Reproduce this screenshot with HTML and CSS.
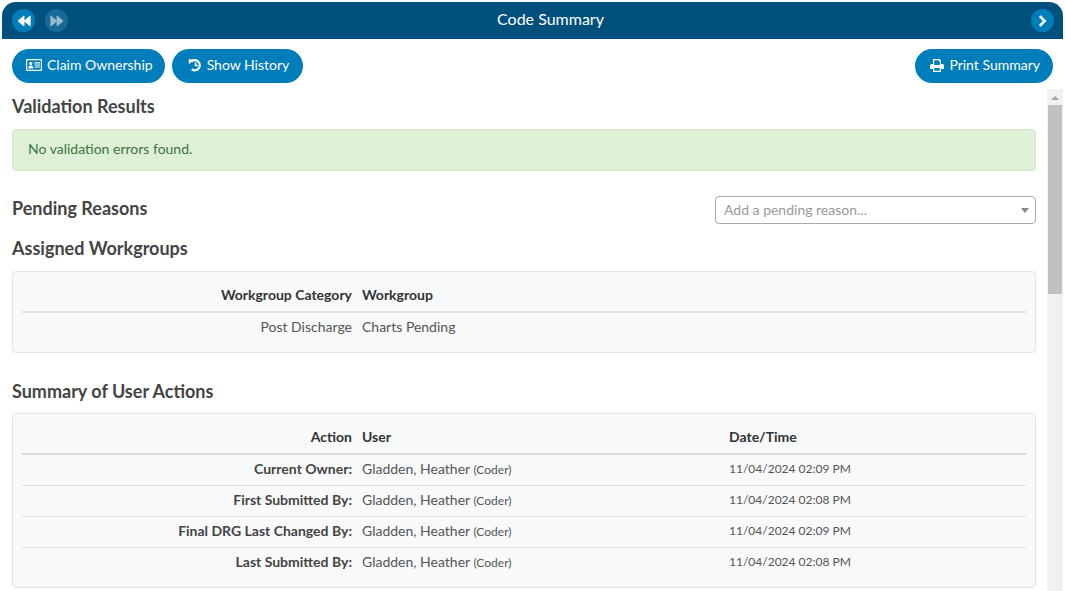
FILE: index.html
```html
<!DOCTYPE html>
<html lang="en">

<head>
    <meta charset="UTF-8">
    <meta name="viewport" content="width=device-width, initial-scale=1.0">
    <title>Code Summary</title>
    <link rel="stylesheet" href="styles.css">
</head>

<body>
    <section class="app">
        <header class="titlebar">
            <div class="nav-group">
                <button class="nav-btn" aria-label="Previous">
                    <svg viewBox="0 0 16 16" width="14" height="14"><path d="M8 2.2v11.6L1.2 8zM15 2.2v11.6L8.2 8z" fill="#fff" stroke="#fff" stroke-width="1" stroke-linejoin="round"/></svg>
                </button>
                <button class="nav-btn nav-btn-off" aria-label="Next">
                    <svg viewBox="0 0 16 16" width="14" height="14"><path d="M1 2.2v11.6L7.8 8zM8 2.2v11.6L14.8 8z" fill="#fff" stroke="#fff" stroke-width="1" stroke-linejoin="round"/></svg>
                </button>
            </div>
            <h1>Code Summary</h1>
            <button class="nav-btn" aria-label="Forward">
                <svg viewBox="0 0 16 16" width="14" height="14"><path d="M5.5 2.5 11 8l-5.500 5.500" fill="none" stroke="#fff" stroke-width="3"/></svg>
            </button>
        </header>

        <div class="toolbar">
            <button class="pill pill-claim">
                <svg viewBox="0 0 16 12" width="16" height="12"><path fill-rule="evenodd" d="M1 0h14a1 1 0 0 1 1 1v10a1 1 0 0 1-1 1H1a1 1 0 0 1-1-1V1a1 1 0 0 1 1-1zM1.200 1.300v9.400h13.600V1.300z" fill="#fff"/><circle cx="4.800" cy="4.600" r="1.700" fill="#fff"/><path d="M2.200 9.600c0-2.300 1-3.200 2.600-3.200s2.600.9 2.600 3.200zM8.500 3.300H14v1.100H8.500zM8.500 5.400H14v1.100H8.500zM8.500 7.500H14v1.100H8.500z" fill="#fff"/></svg>
                <span>Claim Ownership</span>
            </button>
            <button class="pill pill-history">
                <svg viewBox="0 0 14 14" width="14" height="14"><path d="M3.300 3.600A5 5 0 1 1 3.800 11.300" fill="none" stroke="#fff" stroke-width="2.300"/><path d="M.5 1.200 6 1.400 1 6.200z" fill="#fff"/><path d="M7.500 4.400v3h2.300" fill="none" stroke="#fff" stroke-width="1.500"/></svg>
                <span>Show History</span>
            </button>
            <button class="pill pill-print">
                <svg viewBox="0 0 14 13" width="14" height="13"><path fill-rule="evenodd" d="M3 0h6.500L11 1.500V5h1.500A1.500 1.500 0 0 1 14 6.500V10h-3v3H3v-3H0V6.500A1.500 1.500 0 0 1 1.500 5H3zM4.200 1.200V6h5.600V2.200H8.700v-1zM4.200 9v2.800h5.600V9z" fill="#fff"/></svg>
                <span>Print Summary</span>
            </button>
        </div>

        <div class="scroll-area">
            <main class="content">
                <h2>Validation Results</h2>
                <div class="alert-ok">No validation errors found.</div>

                <div class="pending-row">
                    <h2>Pending Reasons</h2>
                    <div class="select-box">
                        <span>Add a pending reason...</span>
                        <i class="caret"></i>
                    </div>
                </div>

                <h2 class="workgroups-title">Assigned Workgroups</h2>
                <div class="panel panel-groups">
                    <table>
                        <thead>
                            <tr>
                                <th class="label-col">Workgroup Category</th>
                                <th>Workgroup</th>
                            </tr>
                        </thead>
                        <tbody>
                            <tr>
                                <td class="label-col plain">Post Discharge</td>
                                <td>Charts Pending</td>
                            </tr>
                        </tbody>
                    </table>
                </div>

                <h2 class="actions-title">Summary of User Actions</h2>
                <div class="panel panel-actions">
                    <table>
                        <thead>
                            <tr>
                                <th class="label-col">Action</th>
                                <th class="user-col">User</th>
                                <th>Date/Time</th>
                            </tr>
                        </thead>
                        <tbody>
                            <tr>
                                <td class="label-col">Current Owner:</td>
                                <td>Gladden, Heather <small>(Coder)</small></td>
                                <td class="when">11/04/2024 02:09 PM</td>
                            </tr>
                            <tr>
                                <td class="label-col">First Submitted By:</td>
                                <td>Gladden, Heather <small>(Coder)</small></td>
                                <td class="when">11/04/2024 02:08 PM</td>
                            </tr>
                            <tr>
                                <td class="label-col">Final DRG Last Changed By:</td>
                                <td>Gladden, Heather <small>(Coder)</small></td>
                                <td class="when">11/04/2024 02:09 PM</td>
                            </tr>
                            <tr>
                                <td class="label-col">Last Submitted By:</td>
                                <td>Gladden, Heather <small>(Coder)</small></td>
                                <td class="when">11/04/2024 02:08 PM</td>
                            </tr>
                        </tbody>
                    </table>
                </div>
            </main>

            <div class="scrollbar">
                <i class="scroll-arrow"></i>
                <div class="scroll-thumb"></div>
            </div>
        </div>
    </section>
</body>

</html>
```

FILE: styles.css
```css
* {
    margin: 0;
    padding: 0;
    box-sizing: border-box;
}

html,
body {
    height: 100%;
    overflow: hidden;
}

body {
    font-family: Lato, "Open Sans", sans-serif;
    font-size: 14px;
    color: #555;
    background-color: #fff;
}

button {
    font-family: inherit;
    border: 0;
}

.app {
    display: flex;
    flex-direction: column;
    height: 591px;
    padding: 2px 2px 0;
}

.titlebar {
    display: flex;
    flex-shrink: 0;
    align-items: center;
    justify-content: space-between;
    height: 37px;
    padding: 0 9px 0 10px;
    color: #fff;
    background-color: #00507d;
    border-radius: 14px 14px 0 0;
}

.titlebar h1 {
    font-size: 16px;
    font-weight: 400;
    padding-bottom: 5px;
    margin-left: 2px;
}

.nav-group {
    display: flex;
    gap: 10px;
}

.nav-btn {
    display: flex;
    align-items: center;
    justify-content: center;
    width: 23px;
    height: 23px;
    background-color: #007dbb;
    border-radius: 50%;
}

.nav-btn-off {
    background-color: #1a6a99;
}

.nav-btn-off svg {
    opacity: 0.55;
}

.toolbar {
    display: flex;
    flex-shrink: 0;
    gap: 7px;
    padding: 10px 10px 6px;
}

.pill {
    display: flex;
    align-items: center;
    gap: 5px;
    height: 34px;
    padding: 0 13px;
    font-size: 14px;
    color: #fff;
    background-color: #007dbb;
    border-radius: 17px;
}

.pill span {
    padding-bottom: 3px;
}

.pill svg {
    margin-bottom: 2px;
}

.pill-claim {
    padding: 0 12px 0 14px;
}

.pill-history {
    padding: 0 14px 0 16px;
}

.pill-print {
    margin-left: auto;
    padding-left: 15px;
}

.scroll-area {
    display: flex;
    flex: 1;
    min-height: 0;
}

.content {
    flex: 1;
    min-width: 0;
    padding: 0 11px 0 10px;
    overflow: hidden;
}

h2 {
    font-size: 18px;
    font-weight: 700;
    line-height: 22px;
    color: #444;
}

.content > h2:first-child {
    margin-top: 6px;
}

.alert-ok {
    height: 42px;
    margin-top: 12px;
    padding: 0 15px;
    line-height: 38px;
    color: #3c763d;
    background-color: #dff0d8;
    border: 1px solid #d6e9c6;
    border-radius: 4px;
}

.pending-row {
    display: flex;
    align-items: center;
    justify-content: space-between;
    margin-top: 25px;
}

.pending-row h2 {
    padding-bottom: 5px;
}

.select-box {
    display: flex;
    align-items: center;
    justify-content: space-between;
    width: 321px;
    height: 28px;
    padding: 0 6px 0 8px;
    color: #999;
    border: 1px solid #aaa;
    border-radius: 4px;
}

.select-box span {
    padding-bottom: 2px;
}

.caret {
    width: 0;
    height: 0;
    border-left: 4px solid transparent;
    border-right: 4px solid transparent;
    border-top: 5px solid #888;
}

.workgroups-title {
    margin-top: 13px;
}

.panel {
    margin-top: 12px;
    padding: 8px 9px;
    background-color: #f8f9fa;
    border: 1px solid #e3e3e3;
    border-radius: 4px;
}

.panel-groups {
    padding-bottom: 9px;
}

.panel-groups td {
    padding-bottom: 4px;
}

.panel-actions {
    margin-top: 11px;
    padding-bottom: 9px;
}

.actions-title {
    margin-top: 27px;
}

table {
    width: 100%;
    border-collapse: collapse;
}

th,
td {
    padding: 0 5px 2px;
    text-align: left;
}

th {
    height: 32px;
    color: #333;
    border-bottom: 2px solid #ddd;
}

td {
    height: 31px;
    border-bottom: 1px solid #ddd;
}

tbody tr:last-child td {
    border-bottom: 0;
}

.label-col {
    width: 335px;
    text-align: right;
}

td.label-col {
    font-weight: 700;
    color: #444;
}

td.plain {
    font-weight: 400;
    color: #555;
}

.user-col {
    width: 367px;
}

small {
    font-size: 12px;
}

.when {
    font-size: 12px;
}

.scrollbar {
    display: flex;
    flex-direction: column;
    align-items: center;
    flex-shrink: 0;
    width: 16px;
    background-color: #f1f1f1;
}

.scroll-arrow {
    width: 0;
    height: 0;
    margin: 7px 0 5px;
    border-left: 4px solid transparent;
    border-right: 4px solid transparent;
    border-bottom: 4px solid #a3a3a3;
}

.scroll-thumb {
    width: 14px;
    height: 189px;
    background-color: #c1c1c1;
}
```
